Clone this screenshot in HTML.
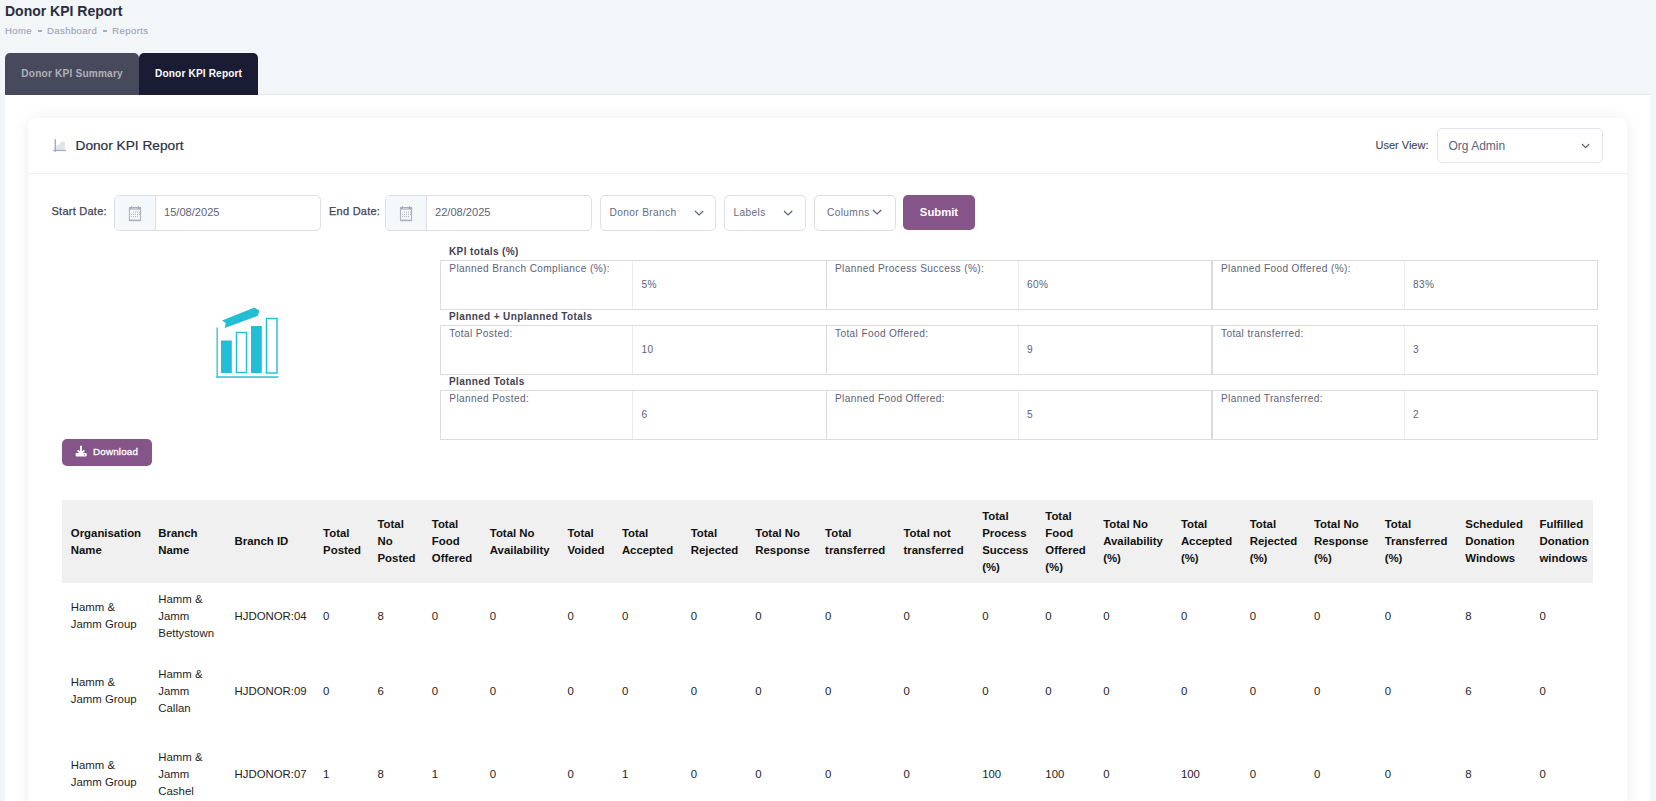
<!DOCTYPE html>
<html><head><meta charset="utf-8"><title>Donor KPI Report</title>
<style>
*{box-sizing:border-box;margin:0;padding:0}
html,body{width:1656px;height:801px;overflow:hidden}
body{background:#f3f6f9;font-family:"Liberation Sans",sans-serif;position:relative;color:#3f4254}
.a{position:absolute;white-space:nowrap}
.title{left:5px;top:1px;font-size:14px;font-weight:bold;color:#2a2c3c;line-height:20px}
.bc{left:5px;top:23.6px;font-size:9.5px;color:#9fa3b5;line-height:14px;letter-spacing:0.42px;-webkit-text-stroke:0.15px #9fa3b5}
.bc span.d{display:inline-block;width:4px;height:2px;background:#a9acbb;vertical-align:middle;margin:0 5.5px 0 5.5px;position:relative;top:-0.5px}
.tab{top:53px;height:42px;border-radius:5px 5px 0 0;font-weight:bold;font-size:10.1px;text-align:center;line-height:42.3px}
.t1{left:5px;width:134px;background:#474a5c;color:#afb0b9;letter-spacing:0.2px;text-indent:0.2px}
.t2{left:139px;width:119px;background:#1a1c33;color:#fff;letter-spacing:0.15px;text-indent:0.15px}
.cont{left:5px;top:95px;width:1645px;height:720px;background:#fff}
.tline{left:258px;top:94px;width:1392px;height:1px;background:#e4e6ea}
.card{left:28px;top:118px;width:1599px;height:720px;background:#fff;border-radius:8px;box-shadow:0 0 15px rgba(0,0,0,0.08)}
.hline{left:28px;top:173px;width:1599px;height:1px;background:#eef1f5}
.ch{left:75.5px;top:137px;font-size:13.7px;color:#2b2f45;line-height:18px;-webkit-text-stroke:0.2px #2b2f45}
.lbl{font-size:11px;color:#3f4254;line-height:14px;-webkit-text-stroke:0.25px #3f4254;letter-spacing:0.25px}
.ig{top:195px;height:36px;border:1px solid #dcdfe8;border-radius:5px;background:#fff}
.addon{position:absolute;left:0;top:0;bottom:0;width:41px;background:#f5f8fa;border-right:1px solid #dcdfe8;border-radius:4px 0 0 4px}
.ival{position:absolute;left:49px;top:9.3px;font-size:11.1px;color:#5e6278;line-height:14px}
.sel{top:195px;height:36px;border:1px solid #dcdfe8;border-radius:5px;background:#fff;font-size:10.2px;letter-spacing:0.35px;color:#676b7e}
.sel .tx{position:absolute;top:9.6px;line-height:14px}
.chev{position:absolute}
.btn{background:#855488;color:#fff;border-radius:5px;font-weight:bold;text-align:center}
.kh{font-size:10px;letter-spacing:0.38px;font-weight:bold;color:#3f4254;line-height:14px;left:449px}
.kt{left:440px;width:1158px;height:50px;border:1px solid #dcdcdc}
.kc{position:absolute;top:0;bottom:0;border-left:1px solid #e8e8e8}
.kl{position:absolute;font-size:10.1px;letter-spacing:0.38px;color:#5e6278;line-height:14px;white-space:nowrap}
.th{top:500px;left:62px;width:1531px;height:83px;background:#f0f0f0}
.hc{font-size:11.4px;font-weight:bold;color:#111;line-height:17px}
.dc{font-size:11.4px;color:#1e1e1e;line-height:17px}
</style></head><body>
<div class="a title">Donor KPI Report</div>
<div class="a bc">Home<span class="d"></span>Dashboard<span class="d"></span>Reports</div>
<div class="a tab t1">Donor KPI Summary</div>
<div class="a tab t2">Donor KPI Report</div>
<div class="a cont"></div>
<div class="a tline"></div>
<div class="a card"></div>
<div class="a hline"></div>
<!-- card header icon -->
<svg class="a" style="left:48px;top:134px" width="24" height="22" viewBox="0 0 24 22">
<path d="M7.5 16 L7.5 12 Q10 11.6 11.2 10.2 L13.7 7.4 L16.8 7.4 L16.8 16 Z" fill="#e1e3ea"/>
<rect x="6.6" y="5.2" width="1.4" height="12.7" fill="#a5a9bb"/>
<rect x="5.2" y="15.9" width="12.8" height="1.2" fill="#a5a9bb"/>
</svg>
<div class="a ch">Donor KPI Report</div>
<!-- user view -->
<div class="a lbl" style="left:1375.5px;top:138px;font-size:11px;-webkit-text-stroke:0.1px #3f4254;letter-spacing:0px">User View:</div>
<div class="a sel" style="left:1437px;top:128px;width:166px;height:35px;border-color:#e2e4ee">
  <div class="tx" style="left:10.5px;top:9.5px;font-size:12px;letter-spacing:0;color:#5e6278">Org Admin</div>
  <svg class="chev" style="left:143.3px;top:13.6px" width="10" height="7" viewBox="0 0 10 7"><path d="M1 1 L4.6 4.7 L8.2 1" fill="none" stroke="#5e6278" stroke-width="1.15"/></svg>
</div>
<!-- filters -->
<div class="a lbl" style="left:51.5px;top:203.5px">Start Date:</div>
<div class="a ig" style="left:114px;width:207px">
  <div class="addon"></div>
  <svg class="a" style="left:9px;top:6px" width="22" height="22" viewBox="0 0 22 22"><rect x="5.4" y="5.5" width="11.2" height="13.2" fill="none" stroke="#a9adc0" stroke-width="1"/><rect x="5" y="5" width="12" height="2.6" fill="#a9adc0"/><rect x="7.6" y="6" width="5.8" height="0.8" fill="#d5d8e2"/><rect x="7" y="4" width="1" height="1.2" fill="#a9adc0"/><rect x="14" y="4" width="1" height="1.2" fill="#a9adc0"/><path d="M9 10.2h1M11 10.2h1M13 10.2h1M15 10.2h1M7 12.4h1M9 12.4h1M11 12.4h1M13 12.4h1M15 12.4h1M7 14.6h1M9 14.6h1M11 14.6h1M13 14.6h1" stroke="#a9adc0" stroke-width="1"/><rect x="5" y="17.6" width="12" height="1.2" fill="#a9adc0"/></svg>
  <div class="ival">15/08/2025</div>
</div>
<div class="a lbl" style="left:329px;top:203.5px">End Date:</div>
<div class="a ig" style="left:385px;width:207px">
  <div class="addon"></div>
  <svg class="a" style="left:9px;top:6px" width="22" height="22" viewBox="0 0 22 22"><rect x="5.4" y="5.5" width="11.2" height="13.2" fill="none" stroke="#a9adc0" stroke-width="1"/><rect x="5" y="5" width="12" height="2.6" fill="#a9adc0"/><rect x="7.6" y="6" width="5.8" height="0.8" fill="#d5d8e2"/><rect x="7" y="4" width="1" height="1.2" fill="#a9adc0"/><rect x="14" y="4" width="1" height="1.2" fill="#a9adc0"/><path d="M9 10.2h1M11 10.2h1M13 10.2h1M15 10.2h1M7 12.4h1M9 12.4h1M11 12.4h1M13 12.4h1M15 12.4h1M7 14.6h1M9 14.6h1M11 14.6h1M13 14.6h1" stroke="#a9adc0" stroke-width="1"/><rect x="5" y="17.6" width="12" height="1.2" fill="#a9adc0"/></svg>
  <div class="ival">22/08/2025</div>
</div>
<div class="a sel" style="left:600px;width:116px">
  <div class="tx" style="left:8.5px">Donor Branch</div>
  <svg class="chev" style="left:93.3px;top:14.2px" width="11" height="7" viewBox="0 0 11 7"><path d="M1 1 L5.1 5 L9.2 1" fill="none" stroke="#5e6278" stroke-width="1.25"/></svg>
</div>
<div class="a sel" style="left:724px;width:82px">
  <div class="tx" style="left:8.5px">Labels</div>
  <svg class="chev" style="left:58.3px;top:14.2px" width="11" height="7" viewBox="0 0 11 7"><path d="M1 1 L5.1 5 L9.2 1" fill="none" stroke="#5e6278" stroke-width="1.25"/></svg>
</div>
<div class="a sel" style="left:814px;width:82px;border-color:#dedede">
  <div class="tx" style="left:12px">Columns</div>
  <svg class="chev" style="left:56.5px;top:12.7px" width="11" height="7" viewBox="0 0 11 7"><path d="M1 1 L5.1 5 L9.2 1" fill="none" stroke="#5e6278" stroke-width="1.25"/></svg>
</div>
<div class="a btn" style="left:903px;top:195px;width:72px;height:35px;line-height:35px;font-size:11.3px">Submit</div>

<!-- chart icon -->
<svg class="a" style="left:210px;top:300px" width="80" height="85" viewBox="0 0 80 85">
<rect x="6.5" y="27.5" width="1.3" height="50" fill="#2bbfd6"/>
<rect x="6.5" y="76.3" width="62" height="1.5" fill="#2bbfd6"/>
<rect x="11" y="40.5" width="10.8" height="32.5" fill="#22bed6"/>
<rect x="26.5" y="32.5" width="10" height="40" fill="none" stroke="#22bed6" stroke-width="1.4"/>
<rect x="41" y="26" width="10.8" height="47" fill="#22bed6"/>
<rect x="56.5" y="18.5" width="10.5" height="54.5" fill="none" stroke="#22bed6" stroke-width="1.4"/>
<path d="M12 20.5 L44.5 7.5 L49.25 10.5 L48 15.75 L14.75 28 L15.75 23 Z" fill="#22bed6"/>
</svg>

<div class="a btn" style="left:62px;top:439px;width:90px;height:27px;line-height:27px;font-size:9.8px;letter-spacing:0.2px;font-weight:normal;text-align:left;padding-left:31px;-webkit-text-stroke:0.3px #fff"><span style="position:relative;top:-0.8px">Download</span></div>
<svg class="a" style="left:70px;top:440px" width="25" height="25" viewBox="0 0 25 25"><rect x="10" y="5.8" width="2" height="7" fill="#fff"/><path d="M7.6 10.3 L11 13.5 L14.4 10.3" fill="none" stroke="#fff" stroke-width="1.8"/><rect x="5.6" y="13.1" width="11.1" height="3.5" rx="1" fill="#fff"/><circle cx="14.4" cy="14.8" r="0.6" fill="#845187"/></svg>
<!-- KPI totals -->
<div class="a kh" style="top:245.2px">KPI totals (%)</div>
<div class="a kt" style="top:260px"></div>
<div class="a kh" style="top:310.2px">Planned + Unplanned Totals</div>
<div class="a kt" style="top:325px"></div>
<div class="a kh" style="top:375.2px">Planned Totals</div>
<div class="a kt" style="top:390px"></div>
<div class="a kl" style="left:449.3px;top:262px">Planned Branch Compliance (%):</div>
<div class="a kl" style="left:641.6px;top:278.2px">5%</div>
<div class="a kl" style="left:835px;top:262px">Planned Process Success (%):</div>
<div class="a kl" style="left:1027px;top:278.2px">60%</div>
<div class="a kl" style="left:1221px;top:262px">Planned Food Offered (%):</div>
<div class="a kl" style="left:1413px;top:278.2px">83%</div>
<div class="a" style="left:632.0px;top:261px;width:1px;height:48px;background:#ebebeb"></div>
<div class="a" style="left:826.0px;top:261px;width:1px;height:48px;background:#dcdcdc"></div>
<div class="a" style="left:1017.5px;top:261px;width:1px;height:48px;background:#ebebeb"></div>
<div class="a" style="left:1211.0px;top:261px;width:1px;height:48px;background:#dcdcdc"></div>
<div class="a" style="left:1212.0px;top:261px;width:1px;height:48px;background:#dcdcdc"></div>
<div class="a" style="left:1403.5px;top:261px;width:1px;height:48px;background:#ebebeb"></div>
<div class="a kl" style="left:449.3px;top:327px">Total Posted:</div>
<div class="a kl" style="left:641.6px;top:343.2px">10</div>
<div class="a kl" style="left:835px;top:327px">Total Food Offered:</div>
<div class="a kl" style="left:1027px;top:343.2px">9</div>
<div class="a kl" style="left:1221px;top:327px">Total transferred:</div>
<div class="a kl" style="left:1413px;top:343.2px">3</div>
<div class="a" style="left:632.0px;top:326px;width:1px;height:48px;background:#ebebeb"></div>
<div class="a" style="left:826.0px;top:326px;width:1px;height:48px;background:#dcdcdc"></div>
<div class="a" style="left:1017.5px;top:326px;width:1px;height:48px;background:#ebebeb"></div>
<div class="a" style="left:1211.0px;top:326px;width:1px;height:48px;background:#dcdcdc"></div>
<div class="a" style="left:1212.0px;top:326px;width:1px;height:48px;background:#dcdcdc"></div>
<div class="a" style="left:1403.5px;top:326px;width:1px;height:48px;background:#ebebeb"></div>
<div class="a kl" style="left:449.3px;top:392px">Planned Posted:</div>
<div class="a kl" style="left:641.6px;top:408.2px">6</div>
<div class="a kl" style="left:835px;top:392px">Planned Food Offered:</div>
<div class="a kl" style="left:1027px;top:408.2px">5</div>
<div class="a kl" style="left:1221px;top:392px">Planned Transferred:</div>
<div class="a kl" style="left:1413px;top:408.2px">2</div>
<div class="a" style="left:632.0px;top:391px;width:1px;height:48px;background:#ebebeb"></div>
<div class="a" style="left:826.0px;top:391px;width:1px;height:48px;background:#dcdcdc"></div>
<div class="a" style="left:1017.5px;top:391px;width:1px;height:48px;background:#ebebeb"></div>
<div class="a" style="left:1211.0px;top:391px;width:1px;height:48px;background:#dcdcdc"></div>
<div class="a" style="left:1212.0px;top:391px;width:1px;height:48px;background:#dcdcdc"></div>
<div class="a" style="left:1403.5px;top:391px;width:1px;height:48px;background:#ebebeb"></div>

<!-- data table -->
<div class="a th"></div>
<div class="a hc" style="left:70.8px;top:524.5px">Organisation<br>Name</div>
<div class="a hc" style="left:158.3px;top:524.5px">Branch<br>Name</div>
<div class="a hc" style="left:234.5px;top:533.0px">Branch ID</div>
<div class="a hc" style="left:323.1px;top:524.5px">Total<br>Posted</div>
<div class="a hc" style="left:377.5px;top:516.0px">Total<br>No<br>Posted</div>
<div class="a hc" style="left:431.8px;top:516.0px">Total<br>Food<br>Offered</div>
<div class="a hc" style="left:489.8px;top:524.5px">Total No<br>Availability</div>
<div class="a hc" style="left:567.4px;top:524.5px">Total<br>Voided</div>
<div class="a hc" style="left:621.9px;top:524.5px">Total<br>Accepted</div>
<div class="a hc" style="left:690.7px;top:524.5px">Total<br>Rejected</div>
<div class="a hc" style="left:755.3px;top:524.5px">Total No<br>Response</div>
<div class="a hc" style="left:825.1px;top:524.5px">Total<br>transferred</div>
<div class="a hc" style="left:903.5px;top:524.5px">Total not<br>transferred</div>
<div class="a hc" style="left:982.2px;top:507.5px">Total<br>Process<br>Success<br>(%)</div>
<div class="a hc" style="left:1045.3px;top:507.5px">Total<br>Food<br>Offered<br>(%)</div>
<div class="a hc" style="left:1103.2px;top:516.0px">Total No<br>Availability<br>(%)</div>
<div class="a hc" style="left:1180.9px;top:516.0px">Total<br>Accepted<br>(%)</div>
<div class="a hc" style="left:1249.7px;top:516.0px">Total<br>Rejected<br>(%)</div>
<div class="a hc" style="left:1314px;top:516.0px">Total No<br>Response<br>(%)</div>
<div class="a hc" style="left:1384.7px;top:516.0px">Total<br>Transferred<br>(%)</div>
<div class="a hc" style="left:1465.3px;top:516.0px">Scheduled<br>Donation<br>Windows</div>
<div class="a hc" style="left:1539.5px;top:516.0px">Fulfilled<br>Donation<br>windows</div>
<div class="a dc" style="left:70.8px;top:598.8000000000001px">Hamm &amp;<br>Jamm Group</div>
<div class="a dc" style="left:158.3px;top:591.1px">Hamm &amp;<br>Jamm<br>Bettystown</div>
<div class="a dc" style="left:234.5px;top:608.1px">HJDONOR:04</div>
<div class="a dc" style="left:323.1px;top:608.1px">0</div>
<div class="a dc" style="left:377.5px;top:608.1px">8</div>
<div class="a dc" style="left:431.8px;top:608.1px">0</div>
<div class="a dc" style="left:489.8px;top:608.1px">0</div>
<div class="a dc" style="left:567.4px;top:608.1px">0</div>
<div class="a dc" style="left:621.9px;top:608.1px">0</div>
<div class="a dc" style="left:690.7px;top:608.1px">0</div>
<div class="a dc" style="left:755.3px;top:608.1px">0</div>
<div class="a dc" style="left:825.1px;top:608.1px">0</div>
<div class="a dc" style="left:903.5px;top:608.1px">0</div>
<div class="a dc" style="left:982.2px;top:608.1px">0</div>
<div class="a dc" style="left:1045.3px;top:608.1px">0</div>
<div class="a dc" style="left:1103.2px;top:608.1px">0</div>
<div class="a dc" style="left:1180.9px;top:608.1px">0</div>
<div class="a dc" style="left:1249.7px;top:608.1px">0</div>
<div class="a dc" style="left:1314px;top:608.1px">0</div>
<div class="a dc" style="left:1384.7px;top:608.1px">0</div>
<div class="a dc" style="left:1465.3px;top:608.1px">8</div>
<div class="a dc" style="left:1539.5px;top:608.1px">0</div>
<div class="a dc" style="left:70.8px;top:673.9000000000001px">Hamm &amp;<br>Jamm Group</div>
<div class="a dc" style="left:158.3px;top:666.2px">Hamm &amp;<br>Jamm<br>Callan</div>
<div class="a dc" style="left:234.5px;top:683.2px">HJDONOR:09</div>
<div class="a dc" style="left:323.1px;top:683.2px">0</div>
<div class="a dc" style="left:377.5px;top:683.2px">6</div>
<div class="a dc" style="left:431.8px;top:683.2px">0</div>
<div class="a dc" style="left:489.8px;top:683.2px">0</div>
<div class="a dc" style="left:567.4px;top:683.2px">0</div>
<div class="a dc" style="left:621.9px;top:683.2px">0</div>
<div class="a dc" style="left:690.7px;top:683.2px">0</div>
<div class="a dc" style="left:755.3px;top:683.2px">0</div>
<div class="a dc" style="left:825.1px;top:683.2px">0</div>
<div class="a dc" style="left:903.5px;top:683.2px">0</div>
<div class="a dc" style="left:982.2px;top:683.2px">0</div>
<div class="a dc" style="left:1045.3px;top:683.2px">0</div>
<div class="a dc" style="left:1103.2px;top:683.2px">0</div>
<div class="a dc" style="left:1180.9px;top:683.2px">0</div>
<div class="a dc" style="left:1249.7px;top:683.2px">0</div>
<div class="a dc" style="left:1314px;top:683.2px">0</div>
<div class="a dc" style="left:1384.7px;top:683.2px">0</div>
<div class="a dc" style="left:1465.3px;top:683.2px">6</div>
<div class="a dc" style="left:1539.5px;top:683.2px">0</div>
<div class="a dc" style="left:70.8px;top:756.8000000000001px">Hamm &amp;<br>Jamm Group</div>
<div class="a dc" style="left:158.3px;top:749.1px">Hamm &amp;<br>Jamm<br>Cashel</div>
<div class="a dc" style="left:234.5px;top:766.1px">HJDONOR:07</div>
<div class="a dc" style="left:323.1px;top:766.1px">1</div>
<div class="a dc" style="left:377.5px;top:766.1px">8</div>
<div class="a dc" style="left:431.8px;top:766.1px">1</div>
<div class="a dc" style="left:489.8px;top:766.1px">0</div>
<div class="a dc" style="left:567.4px;top:766.1px">0</div>
<div class="a dc" style="left:621.9px;top:766.1px">1</div>
<div class="a dc" style="left:690.7px;top:766.1px">0</div>
<div class="a dc" style="left:755.3px;top:766.1px">0</div>
<div class="a dc" style="left:825.1px;top:766.1px">0</div>
<div class="a dc" style="left:903.5px;top:766.1px">0</div>
<div class="a dc" style="left:982.2px;top:766.1px">100</div>
<div class="a dc" style="left:1045.3px;top:766.1px">100</div>
<div class="a dc" style="left:1103.2px;top:766.1px">0</div>
<div class="a dc" style="left:1180.9px;top:766.1px">100</div>
<div class="a dc" style="left:1249.7px;top:766.1px">0</div>
<div class="a dc" style="left:1314px;top:766.1px">0</div>
<div class="a dc" style="left:1384.7px;top:766.1px">0</div>
<div class="a dc" style="left:1465.3px;top:766.1px">8</div>
<div class="a dc" style="left:1539.5px;top:766.1px">0</div>
</body></html>
